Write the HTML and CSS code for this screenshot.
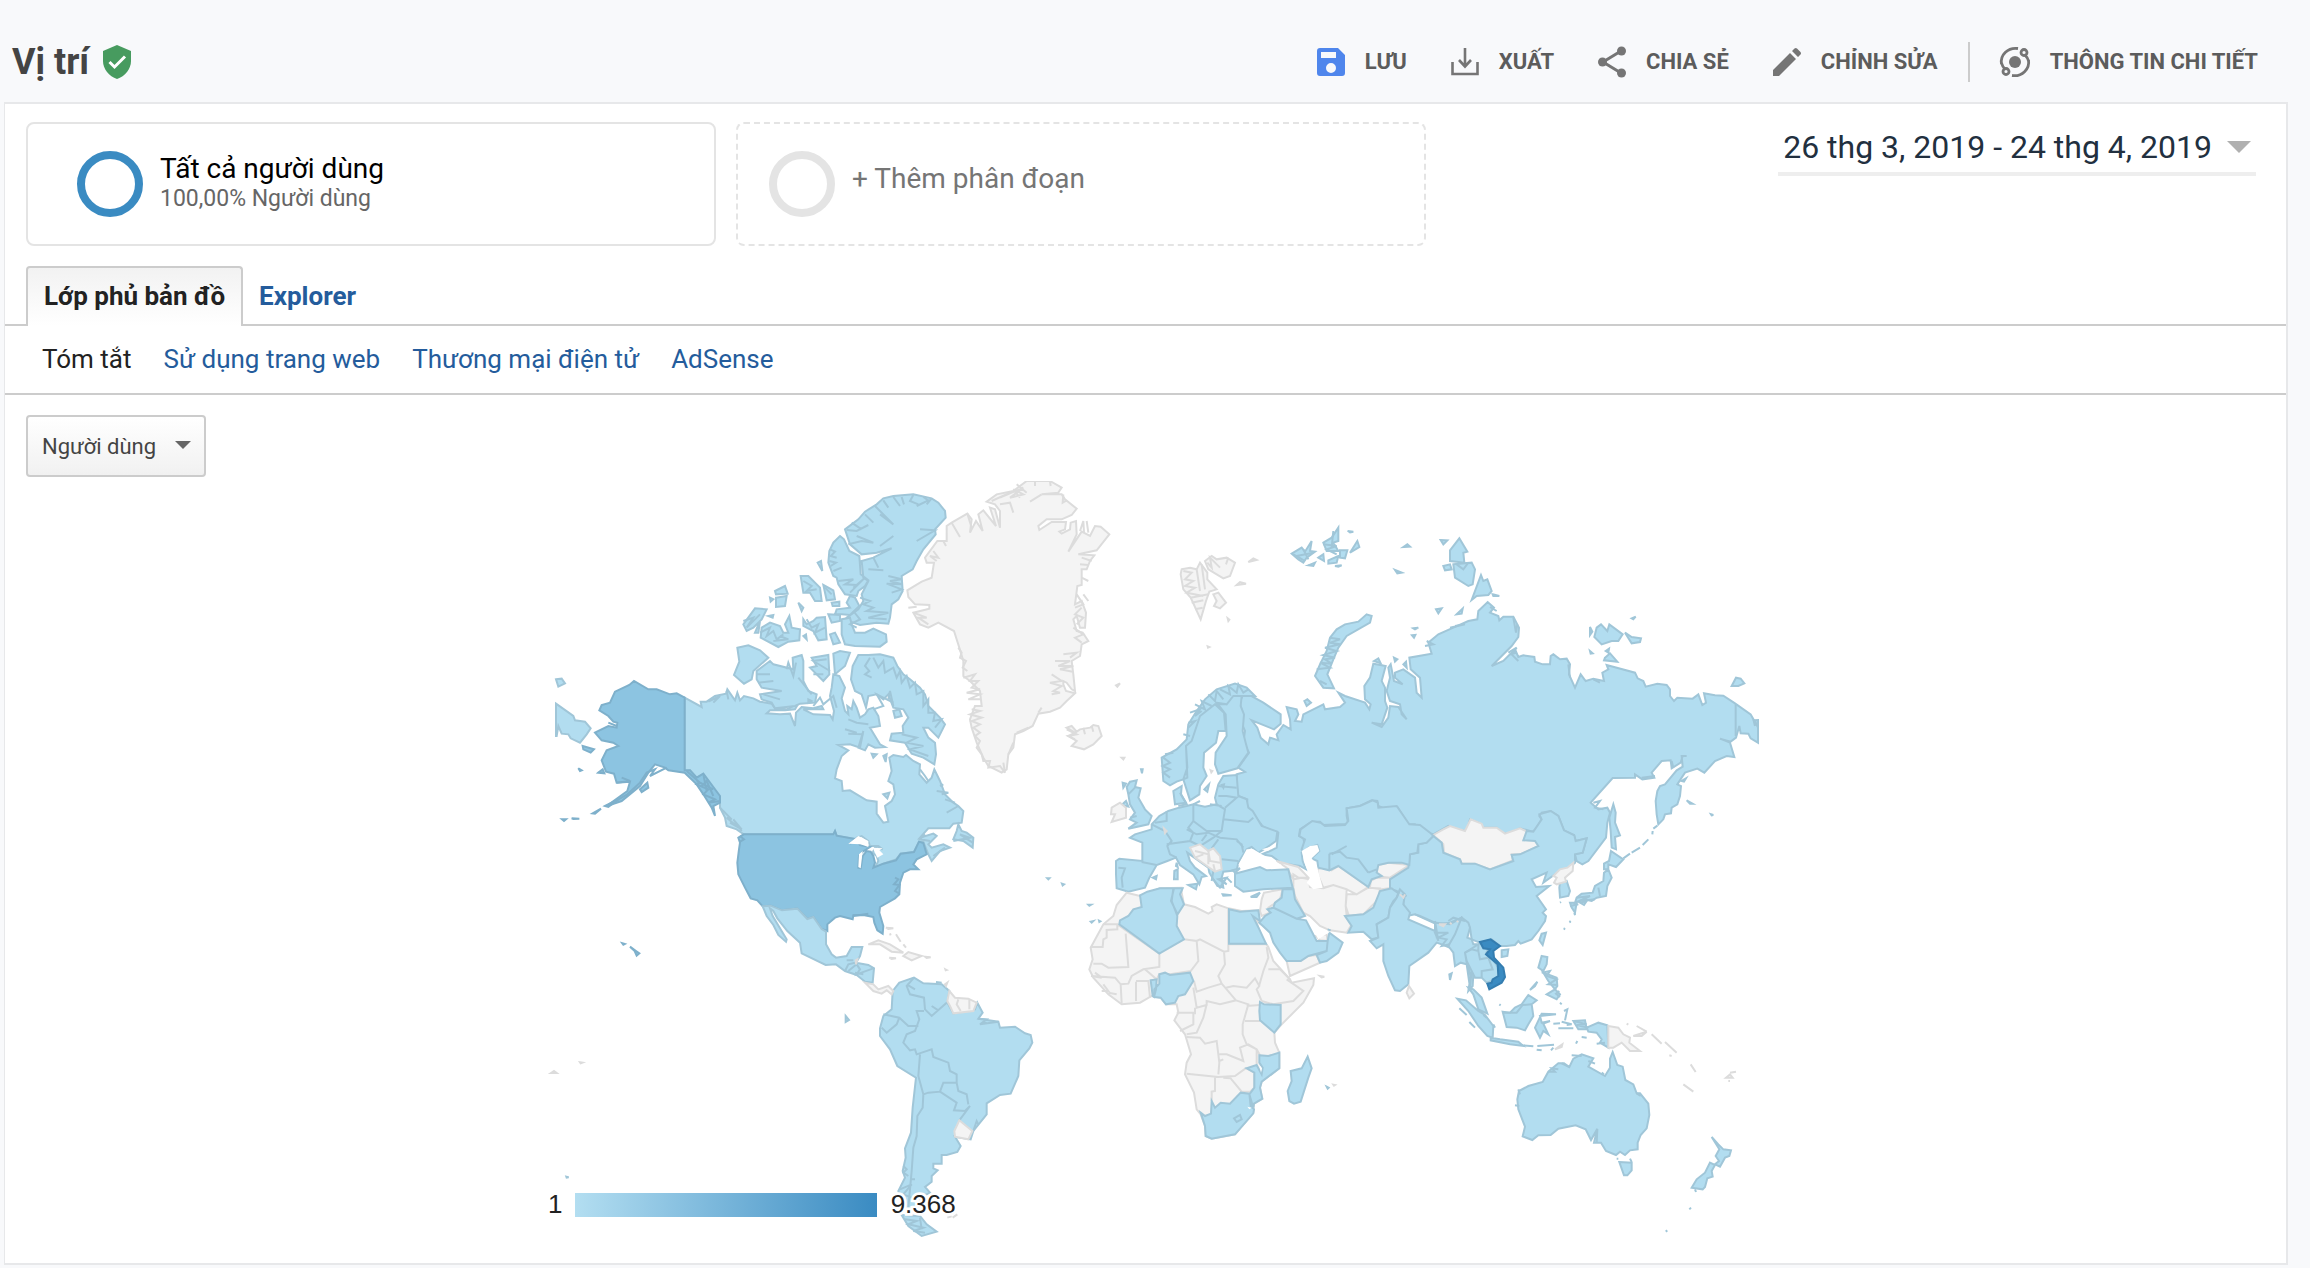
FILE: index.html
```html
<!DOCTYPE html>
<html lang="vi">
<head>
<meta charset="utf-8">
<title>Vị trí</title>
<link rel="stylesheet" href="styles.css">
</head>
<body>
<header class="topbar">
  <h1 class="title">Vị trí</h1>
  <svg class="shield" viewBox="0 0 28 34" aria-hidden="true"><path fill="#479b5f" d="M14 0 28 6v10c0 8-6 15.500-14 18C6 31.500 0 24 0 16V6z"/><path d="m6.500 17 5 5L22 11.500" fill="none" stroke="#fff" stroke-width="3"/></svg>
  <div class="actions">
    <button class="action" type="button"><svg viewBox="0 0 28 28" aria-hidden="true"><path fill="#4f86ec" fill-rule="evenodd" d="M3 0h18l7 7v18a3 3 0 0 1-3 3H3a3 3 0 0 1-3-3V3a3 3 0 0 1 3-3zm1 4v6h15V4zm10 11a5 5 0 1 0 0 10 5 5 0 0 0 0-10z"/></svg>LƯU</button>
    <button class="action" type="button"><svg viewBox="0 0 28 28" aria-hidden="true"><path d="M14 0v18M8 12l6 6.500 6-6.500M1.500 14v12h25V14" fill="none" stroke="#757575" stroke-width="2.600"/></svg>XUẤT</button>
    <button class="action" type="button"><svg viewBox="0 0 28 28" aria-hidden="true"><path d="M23 3 5 14l18 11" fill="none" stroke="#757575" stroke-width="3"/><g fill="#757575"><circle cx="23.500" cy="3" r="4.500"/><circle cx="4.500" cy="14" r="4.500"/><circle cx="23.500" cy="25" r="4.500"/></g></svg>CHIA SẺ</button>
    <button class="action" type="button"><svg viewBox="0 0 28 28" aria-hidden="true"><path fill="#757575" d="M0 22 17 5l6 6L6 28H0zM19 3l2.500-2.500a2 2 0 0 1 2.500 0l3.500 3.500a2 2 0 0 1 0 2.500L25 9z"/></svg>CHỈNH SỬA</button>
    <span class="divider"></span>
    <button class="action insights" type="button"><svg viewBox="0 0 30 30" aria-hidden="true"><g fill="none" stroke="#757575" stroke-width="2.800"><path d="M1.500 17C0 8 8 0 18 1.500M28.500 13c1.500 9-6.500 17-16.500 15.500"/><circle cx="24" cy="5.500" r="3"/><circle cx="6" cy="24.500" r="3"/><path d="M25 8c2 2 3 4 3.500 6M5 22c-2-2-3-4-3.500-6"/></g><circle cx="15" cy="15" r="6" fill="#757575"/></svg>THÔNG TIN CHI TIẾT</button>
  </div>
</header>
<main class="report">
  <section class="segments">
    <button class="segment" type="button"><span class="ring"></span><span><span class="seg-name">Tất cả người dùng</span><span class="seg-share">100,00% Người dùng</span></span></button>
    <button class="segment segment-add" type="button"><span class="ring"></span><span class="add-label">+ Thêm phân đoạn</span></button>
    <button class="date" type="button">26 thg 3, 2019 - 24 thg 4, 2019<span class="caret"></span></button>
  </section>
  <nav class="tabs"><a class="tab tab-on" href="#map">Lớp phủ bản đồ</a><a class="tab" href="#explorer">Explorer</a></nav>
  <nav class="subtabs"><a class="sub-on" href="#summary">Tóm tắt</a><a href="#usage">Sử dụng trang web</a><a href="#ecommerce">Thương mại điện tử</a><a href="#adsense">AdSense</a></nav>
  <div class="metric"><select aria-label="Chỉ số"><option>Người dùng</option></select><span class="metric-caret"></span></div>
  <figure class="map">
  <svg viewBox="-24 60 3684 2304" role="img" aria-label="Người dùng theo quốc gia">
    <defs><linearGradient id="scale"><stop offset="0" stop-color="#b3def1"/><stop offset="1" stop-color="#3a8bc2"/></linearGradient></defs>
    <!-- Canada, Alaska -->
    <g class="on">
      <path d="M434 710 485 738 482 722 500 722 525 705 558 698 562 685 585 718 592 695 600 718 612 705 640 712 660 722 695 728 705 742 740 745 775 728 765 745 735 748 690 748 680 757 720 760 750 758 765 795 768 755 785 738 820 742 845 735 850 745 790 745 820 760 870 762 878 775 882 750 870 705 875 680 880 640 898 645 915 680 905 712 915 750 925 760 922 735 935 745 940 720 950 740 960 770 975 760 985 745 1000 740 1015 765 1020 795 990 800 1020 850 1035 858 1005 860 985 850 975 868 955 860 970 810 960 860 930 850 895 852 925 868 905 885 890 925 885 952 905 960 908 990 930 988 980 1018 1010 1022 1010 1058 1030 1085 1045 1082 1035 1035 1055 1020 1065 1000 1060 970 1045 960 1055 930 1048 890 1060 882 1090 888 1098 882 1120 900 1140 910 1138 940 1160 965 1175 950 1183 925 1200 960 1215 1000 1240 1025 1255 1035 1270 1050 1265 1085 1240 1088 1228 1102 1165 1102 1140 1130 1180 1118 1190 1125 1165 1150 1175 1160 1210 1150 1230 1160 1200 1170 1175 1200 1165 1180 1150 1142 1137 1142 1122 1173 1082 1178 1068 1195 1030 1208 1005 1220 1015 1200 1010 1185 998 1175 1005 1160 1028 1165 1015 1155 990 1155 985 1140 965 1125 950 1130 945 1135 890 1124 885 1110 880 1120 611 1120 590 1105 560 1095 555 1070 540 1040 540 1010 520 985 490 940 470 950 450 928 434 930z"/>
      <path d="M1255 1090 1250 1110 1240 1135 1270 1140 1298 1160 1300 1130 1280 1115 1265 1110zM955 582 985 582 1020 580 1060 590 1072 615 1090 640 1110 655 1140 680 1155 700 1165 735 1200 770 1215 790 1195 830 1165 800 1150 800 1165 830 1185 845 1188 880 1183 910 1150 890 1115 878 1095 845 1050 838 1055 818 1090 815 1088 795 1105 770 1090 745 1060 740 1045 700 1030 715 1010 700 985 705 978 740 965 700 945 690 933 655 938 615z"/>
      <path d="M915 205 955 175 975 152 1010 130 1030 112 1060 105 1120 100 1175 112 1195 125 1215 150 1217 170 1185 205 1187 220 1150 265 1130 300 1118 325 1085 345 1088 390 1075 415 1055 430 1050 470 1045 488 1010 485 960 492 925 480 920 470 955 445 970 420 965 400 985 360 970 350 965 300 1000 290 1055 262 1010 275 965 280 930 250zM900 225 912 235 928 270 958 285 962 340 985 358 975 375 955 390 950 405 915 400 895 370 890 350 880 345 865 305 868 270 880 245z"/>
      <path d="M905 475 930 470 935 490 945 515 975 515 1000 503 1038 520 1040 542 1020 557 945 555 915 550 905 520zM650 630 690 600 700 610 760 625 758 590 785 582 790 600 790 660 805 690 830 700 825 725 780 728 765 735 705 742 695 725 665 715 660 700 725 690 665 680 650 655zM592 560 625 553 660 568 685 590 640 630 635 655 612 668 582 642 598 602zM815 590 865 582 868 640 850 660 810 620 830 615zM880 578 900 570 930 575 915 615 885 640z"/>
      <path d="M665 500 690 485 720 495 730 515 745 515 735 490 748 465 755 500 780 505 778 538 745 542 715 558 662 530zM610 490 645 442 680 445 665 475 640 500 620 510zM790 475 800 490 820 480 830 470 855 468 860 535 835 538 820 510 790 495zM870 520 885 515 900 545 880 550zM782 345 805 345 840 380 845 420 825 420 810 395 790 395zM850 372 880 388 885 415 860 418zM875 425 898 422 898 435 878 435zM930 405 945 410 958 435 930 462 905 460 885 460 890 445 930 440 920 425zM705 390 735 375 743 398 708 400zM708 410 740 405 735 435 708 438zM833 305 843 300 847 330zM775 425 790 440 785 450zM865 460 900 462 900 480 875 485zM690 410 700 415 692 422zM685 465 700 462 698 470zM645 515 660 480 655 515zM790 525 798 520 800 535zM995 878 1010 880 1000 890zM1030 885 1040 880 1037 903zM1030 1000 1048 995 1042 1012zM1060 750 1078 745 1085 765 1065 770zM805 715 815 720 805 725z"/>
      <path d="M48 728 100 765 105 778 135 782 152 802 140 820 120 845 92 832 85 820 65 818 55 795 50 825 48 825zM48 655 65 653 75 667 55 677z"/>
      <path class="line" d="M920 207 950 210 985 192M935 185 965 205M975 160 1000 185M1005 135 1060 190 1020 160M1030 118 1045 140M1060 108 1080 135M1085 108 1092 130M1120 102 1110 120 1135 130M1150 108 1165 118 1130 135M1175 112 1160 130M1130 240 1185 208 1140 205M925 250 965 240 1000 245 950 225M1020 255 1060 225M1000 290 1015 320M985 325 1030 328M1045 345 1085 355 1050 360 1085 370 1040 368 1085 385 1055 395M870 265 885 272 872 285 890 290M868 300 888 305 872 315M880 330 905 320M895 360 940 355 915 370 950 372M930 395 975 350 940 380M960 410 990 420 970 430 1000 440 980 450 1045 455 985 470 1040 475M940 450 960 475 930 490 950 500M990 590 975 615 988 630 975 640 995 650M1000 590 1015 620 1030 600 1035 635 1060 620 1070 650 1080 630 1085 665 1100 645 1110 680 1125 665 1130 700 1150 690 1150 735 1165 715 1165 755 1185 755 1180 780 1205 775 1185 800M1085 820 1130 830 1100 845 1150 855 1110 865 1165 885M660 515 690 500 680 525 700 510 710 535 730 520M700 540 745 535 720 525M790 360 815 375 800 390 830 385M855 380 875 400M870 630 820 600 860 595M820 640 850 640M740 625 745 605 760 645 768 605M650 640 690 640M655 665 700 660M670 700 720 715M560 690 565 715M505 722 540 705 520 725M915 805 950 815 925 818 970 820M925 775 950 785 985 790M1000 745 1030 735 1010 700 1060 725M1200 975 1210 970M1190 990 1225 995 1205 1000M1215 1015 1245 1025M1220 1055 1255 1035M1155 1120 1140 1135 1170 1140M1240 1140 1290 1130 1260 1120 1298 1145M1140 925 1155 945 1165 960M1180 1185 1215 1160"/>
      <path class="line" d="M540 1040 560 1060 550 1050 575 1075 560 1070 590 1095 570 1085 605 1105 580 1075 605 1110M610 480 640 470 620 500 660 460M800 475 815 500 835 490 825 515 855 500M1045 715 1050 690 1060 735M820 735 840 710 850 730 880 705 890 740M775 650 815 700"/>
    </g>
    <g class="mid">
      <path d="M434 710 410 697 390 700 350 685 325 685 282 660 268 672 225 692 210 725 185 732 178 748 205 765 220 782 232 785 230 800 205 795 165 815 185 838 220 845 235 855 200 868 185 898 198 932 222 938 230 965 270 962 262 990 200 1035 245 1020 300 975 325 935 345 910 375 920 385 928 434 935 470 970 490 1000 515 1040 525 1065 520 1035 540 1025 540 1005 490 938 470 950 450 928 434 928z"/>
      <path d="M128 855 162 865 152 875 130 865zM115 922 125 928 120 930zM175 935 188 925 193 937zM300 985 322 965 325 980 305 993zM158 1057 183 1043 165 1058zM66 1075 78 1075 72 1080zM95 1072 118 1073 100 1074zM195 1035 235 1015 205 1038z"/>
      <path class="line" d="M200 1035 262 1000 300 965 320 935 345 925 330 945 380 920M230 965 270 960 245 950M440 930 480 965 470 970 505 985 490 1000 525 1015 505 1025 540 1020M470 960 520 985M485 975 500 960 520 1005M205 785 230 795M490 940 500 990"/>
      <path d="M611 1120 880 1120 885 1110 890 1124 945 1134 930 1148 952 1140 960 1152 990 1158 968 1172 957 1185 955 1220 962 1222 968 1185 980 1170 992 1172 1000 1185 1005 1205 1000 1220 1030 1208 1068 1198 1082 1178 1122 1173 1137 1142 1150 1146 1160 1180 1130 1195 1120 1210 1135 1225 1110 1225 1090 1235 1080 1265 1078 1300 1065 1312 1020 1338 1018 1355 1030 1395 1028 1418 1012 1408 1003 1385 1000 1368 985 1365 970 1362 940 1363 938 1375 900 1365 885 1370 862 1390 862 1410 845 1404 820 1368 802 1374 772 1343 726 1348 692 1334 668 1336 652 1318 632 1312 615 1280 595 1240 592 1205 597 1165 600 1145 595 1130z"/>
      <path class="line" d="M1065 1250 1075 1255 1062 1270 1078 1272 1065 1290 1078 1298M600 1125 612 1135 600 1142M940 1365 985 1358"/>
      <path d="M247 1447 254 1449 250 1451zM270 1457 288 1470 298 1477 290 1484 284 1470z"/>
    </g>
    <g class="sea"><path d="M968 1170 962 1222 955 1218 957 1180zM925 1148 955 1125 985 1140 985 1158 962 1150zM998 1160 1028 1162 1018 1168 1030 1180 1012 1190z"/></g>
    <!-- Greenland, Iceland -->
    <g class="off" transform="translate(1020 0)">
      <path d="M440 60 510 60 545 80 535 95 485 100 545 100 555 115 590 143 575 162 545 175 500 175 475 195 478 207 515 183 558 183 555 205 538 212 545 218 570 205 572 185 588 180 590 220 565 272 605 212 630 225 645 195 662 197 688 220 650 268 595 280 643 283 630 300 620 325 605 325 605 372 592 375 585 430 605 420 618 455 615 500 600 500 590 465 580 475 590 510 608 515 625 540 605 550 600 585 575 600 580 640 585 690 575 685 560 665 550 660 550 670 558 690 585 697 560 720 540 740 510 752 475 758 458 795 430 810 405 820 400 860 385 880 380 925 365 935 325 915 310 890 290 845 275 800 270 775 285 735 305 735 300 690 270 660 250 645 250 600 238 560 222 510 175 485 145 500 120 490 100 455 148 443 148 432 105 430 85 408 82 388 125 362 155 350 162 305 140 305 135 290 172 240 200 240 200 195 215 185 262 158 275 175 270 215 288 180 308 210 295 160 310 148 348 195 330 140 345 145 360 200 360 150 345 130 320 122 350 100 400 90z"/>
      <path d="M560 800 575 795 590 812 600 805 630 800 640 792 655 795 665 825 640 850 612 865 575 855 590 840 565 825 585 815z"/>
      <path class="line" d="M215 185 240 228M262 158 275 200M190 240 198 255M160 270 175 290 150 285 170 300M335 120 390 95 360 110 430 80 390 110 430 100 400 85 420 110M410 70 440 95M450 122 485 100M465 60 465 75M510 60 512 75M550 100 548 125 560 118M360 130 390 125 400 155M600 210 610 180 612 215M620 180 625 215M605 290 635 300M600 310 625 312M590 400 610 430 585 440M605 350 625 360M610 400 625 420M605 440 585 460 610 470 590 490M580 500 610 520 585 530 605 545M550 580 590 575 570 590M525 600 570 600 535 615 580 615 540 625 578 632M515 640 545 660 510 665 545 675 520 690 540 695 515 700M235 560 245 575 240 590 258 600 248 620 262 630M250 650 285 640 270 660 295 660 275 680 300 685 260 695 300 700 265 715 300 715M275 745 300 750 270 760 305 770 275 780 300 790 280 800 300 815 285 825 300 840 290 860 305 880 310 900 330 900 325 920 360 915 375 935 370 905M385 880 400 845M410 815 445 800M100 455 140 470 115 470 145 490M85 440 110 437M475 755 485 740"/>
      <path d="M708 673 720 667 712 677zM725 890 733 890 730 895z"/>
      <path class="line" d="M560 805 590 820 565 825 585 835M610 800 615 820M635 795 640 812"/>
    </g>
    <!-- Svalbard -->
    <g class="off" transform="translate(1740 120)">
      <path d="M185 205 210 200 230 205 240 185 262 215 262 235 290 265 268 272 258 300 242 355 212 290 190 265 182 220zM255 180 275 165 290 175 320 170 345 185 330 225 310 232 265 205zM280 280 295 275 318 305 300 322 282 315 290 300zM385 183 400 172 410 177zM350 252 360 243 378 248zM323 352 328 356 325 360zM263 436 268 438 264 440z"/>
      <path class="line" d="M190 210 215 215 195 235 220 240 195 255 225 260 200 275 250 285M230 205 240 270M245 190 255 265M212 290 265 280M215 305 250 298M225 325 248 320M262 185 275 200 270 170 300 200M325 170 318 190"/>
    </g>
    <!-- Russia -->
    <g class="on" transform="translate(1740 120)">
      <path d="M370 580 385 580 430 605 482 640 482 668 462 685 395 658 412 680 422 710 445 730 450 710 475 718 470 700 490 672 512 685 510 655 500 618 530 625 535 640 525 660 545 662 550 640 610 610 615 625 660 618 675 605 655 575 675 585 735 605 748 625 752 610 735 595 733 555 750 530 760 488 797 495 785 540 795 560 795 600 802 620 785 670 755 665 785 678 805 650 810 615 835 618 860 655 845 640 840 610 810 600 800 570 810 530 805 500 812 490 822 540 848 550 825 530 825 515 850 505 885 530 890 575 905 590 900 530 872 505 868 470 935 458 925 425 955 400 995 382 1045 360 1072 355 1075 330 1103 303 1122 320 1110 335 1135 345 1138 358 1150 347 1180 347 1197 380 1195 408 1175 435 1115 495 1150 480 1185 445 1195 468 1210 463 1243 468 1245 482 1268 490 1290 490 1292 465 1300 460 1320 475 1340 473 1350 490 1347 520 1365 560 1382 520 1397 540 1420 533 1452 540 1447 515 1465 505 1460 492 1545 515 1553 532 1570 540 1577 557 1612 548 1640 552 1650 565 1650 585 1662 600 1672 590 1718 593 1735 580 1747 612 1758 605 1752 577 1785 583 1810 584 1845 607 1892 640 1902 658 1914 657 1914 725 1892 712 1885 698 1862 697 1858 675 1848 710 1832 722 1800 713 1830 725 1843 768 1820 765 1785 780 1753 815 1732 803 1695 815 1685 830 1672 850 1683 855 1680 885 1672 910 1655 920 1653 937 1635 940 1630 955 1615 970 1610 940 1607 900 1612 870 1620 855 1635 850 1670 808 1688 797 1685 765 1700 765 1688 765 1682 785 1655 802 1652 778 1625 780 1595 815 1603 830 1567 835 1545 820 1545 830 1478 831 1412 905 1435 925 1462 920 1470 935 1462 965 1458 1010 1405 1080 1387 1090 1370 1080 1365 1060 1388 1055 1400 1012 1367 1020 1362 1002 1332 988 1315 945 1292 930 1265 935 1258 945 1265 955 1248 985 1238 992 1200 982 1165 998 1145 995 1130 980 1090 980 1075 965 1050 955 1040 990 1005 985 985 975 940 1000 905 990 885 970 865 970 832 918 800 925 775 915 772 900 755 898 720 915 680 922 680 945 685 970 655 970 610 972 600 962 575 962 540 985 537 1005 550 1012 555 1035 545 1055 548 1080 558 1105 540 1095 485 1087 455 1065 425 1060 450 1050 470 1040 475 995 430 978 412 955 395 930 380 920 382 895 355 885 350 855 350 820 375 813 355 800 387 755 370 725 375 690 362 660 368 635 358 605z"/>
      <path d="M740 340 755 345 750 365 680 405 655 440 640 475 622 520 642 562 610 560 585 525 600 490 620 450 630 410 650 385 675 370 715 362zM1018 112 1042 152 1030 155 1033 185 990 180 990 148zM1000 190 1055 185 1065 205 1058 250 1045 255 1005 230zM970 195 990 190 995 205 975 208zM1083 222 1090 240 1102 235 1115 270 1105 282 1070 285 1055 297zM962 117 982 118 970 130zM1010 340 1028 323 1025 338zM948 325 965 322 955 337zM850 138 862 130 870 137zM825 207 845 215 832 217zM553 600 562 595 573 605 560 615zM762 480 775 472 782 487zM1118 280 1138 285 1120 285zM515 158 545 140 555 152 575 120 570 150 585 152 560 170 550 185 535 175zM565 193 585 185 580 195zM610 125 635 110 655 80 655 120 640 125 655 150 620 150zM595 170 610 160 612 180zM660 148 682 148 675 172 660 170zM625 178 655 165 650 185 625 188zM690 155 712 120 718 138zM683 90 700 92 690 94zM645 195 665 193 655 197zM880 382 895 380 885 385zM876 403 886 402 882 410zM822 470 832 475 825 482zM850 490 858 482 860 500zM1430 380 1443 370 1462 390 1468 370 1508 400 1495 420 1475 420 1445 430 1423 408zM1515 395 1535 408 1563 412 1560 423 1535 427zM1455 470 1470 457 1492 482 1452 478zM1410 378 1417 392 1410 402zM1457 450 1467 443 1465 455zM1410 450 1418 457 1412 458zM1535 352 1547 347 1540 355zM1835 555 1848 530 1862 533 1873 547 1855 555zM1480 910 1487 935 1485 965 1500 1003 1485 1008 1488 1045 1475 1040 1472 990 1468 950zM1700 898 1718 908 1710 908zM1773 940 1780 942 1775 943zM1684 840 1698 832 1692 842z"/>
      <path class="line" d="M520 160 555 180 530 165 580 155M550 145 565 175M610 130 650 135 620 145 650 160M640 90 635 140M630 410 660 415 630 425 660 430 615 440 650 450 610 462 645 470 615 475 635 488 600 485 630 500 590 505M600 540 620 550M1847 610 1847 705M1900 655 1905 675M1905 660 1914 680M920 420 940 430 915 435M990 380 1035 370 1005 375M1180 350 1188 395 1192 370M1110 318 1130 330M1165 455 1190 440 1175 460 1195 480M1345 490 1350 530M1420 535 1440 545M1170 460 1190 455M1420 905 1440 900 1425 920 1450 925M1565 830 1605 825M1655 780 1660 800M1010 190 1030 205 1045 185M1600 983 1612 974M1597 1000 1598 990M1585 1015 1568 1032M1560 1040 1535 1055M1530 1058 1510 1072"/>
    </g>
    <!-- Middle East and Central Asia without data -->
    <g class="off" transform="translate(1620 600)">
      <path d="M712 625 740 615 755 628 775 615 865 678 830 700 800 685 760 672 730 680 715 645zM640 640 655 650 685 650 690 678 730 682 760 672 800 685 797 735 815 790 800 815 750 808 720 795 690 765 670 755 645 705 640 680zM800 700 830 700 865 680 900 682 895 715 875 735 850 760 800 765 797 735zM590 600 625 610 655 618 690 655 665 650 640 655 620 620zM895 612 925 605 988 612 930 650 885 645 885 625zM872 660 890 650 930 650 938 680 905 685 870 680zM1060 522 1090 505 1110 495 1155 510 1172 475 1205 488 1210 500 1250 500 1275 518 1320 502 1342 512 1332 535 1365 538 1378 555 1320 580 1295 580 1298 598 1230 625 1185 608 1145 608 1140 595 1092 575 1090 550z"/>
    </g>
    <!-- China, Kazakhstan, South Asia -->
    <g class="on">
      <path transform="translate(2580 1200)" d="M100-75 125-55 130-25 180-5 185 8 225 8 270 25 340 0 335-18 360-20 415-45 405-60 370-62 380-90 400-88 425-125 418-140 452-150 475-135 492-92 523-77 527-60 560-68 548-25 525-20 525 5 500 25 480 30 458 45 430 65 440 35 395 55 408 78 448 75 410 105 438 145 428 155 438 165 435 180 415 210 395 235 362 248 355 240 345 252 320 255 300 255 275 235 240 245 215 235 210 200 185 170 150 185 110 190 45 160 20 165 10 140 10 110-10 90-30 85-30 55 25 20 30-20 55-25 55-50 80-55z"/>
      <path transform="translate(1620 600)" d="M658 525 662 505 697 480 722 485 735 495 795 492 805 480 800 442 840 435 878 418 893 425 895 440 950 435 988 490 1020 492 1050 515 1060 525 1040 545 1015 550 1012 575 990 580 988 612 965 605 925 605 895 612 890 635 905 645 875 655 865 678 775 615 748 628 715 620 712 600 695 592 718 570 712 552 685 560 672 575 665 565 675 535zM748 578 780 572 800 590 835 595 865 635 M795 765 850 760 880 740 900 690 935 682 960 700 940 720 930 740 925 770 890 790 895 830 875 835 850 812 805 815 815 795z"/>
      <path class="line" transform="translate(1620 600)" d="M748 578 748 628M755 580 800 555M865 635 890 625"/>
      <g transform="translate(2580 1200)">
        <path d="M0 85 15 100 10 130 30 155 25 175 105 210 105 185 150 190 185 170 195 190 165 235 150 260 125 250 110 245 85 275 28 315 25 370 0 390-15 388-35 345-50 300-50 250-70 262-90 240-65 230-70 190-35 170-30 140-10 110z"/>
        <path d="M185 170 205 185 210 200 202 230 215 235 220 250 235 250 195 275 200 300 215 330 210 380 200 310 182 305 165 315 160 275 145 255 165 220zM235 250 240 245 265 262 258 278 275 290 295 320 295 345 275 360 260 365 245 350 225 350 220 340 218 375 205 390 212 345 200 305 195 275z"/>
        <path class="line" d="M195 275 215 265 235 270 240 295 265 290 278 325 245 330 245 350M235 250 235 270M45 160 60 165 105 185M105 180 115 240 105 215 145 215 115 230 140 235 125 255 150 250M145 180 160 170 195 180M0 85-10 110M5 100 20 105"/>
        <path d="M205 380 220 385 245 410 262 458 235 445 220 400zM172 413 198 418 235 450 255 462 280 495 278 530 262 525 235 495 205 450zM272 530 300 535 355 542 370 555 330 550 272 538zM308 452 330 455 345 440 365 430 385 402 410 418 395 430 400 465 385 490 375 508 350 500 320 498zM425 458 468 460 420 465 425 485 450 480 430 488 445 520 430 510 420 530 405 500zM425 285 442 288 440 310 430 330 415 320zM430 335 470 350 472 375 465 385 445 360zM440 400 465 385 480 400 470 415zM390 387 412 362 405 375zM560 500 595 485 622 493 625 560 600 545 605 535 590 515 565 512zM520 480 555 478 560 505 535 505zM425 218 438 215 428 252 418 238zM305 268 325 265 322 285 305 288zM148 340 155 337 150 357z"/>
        <path class="line" d="M310 455 350 455 368 432 395 430M370 553 400 556M412 555 462 551M410 566 425 568M453 568 460 560M492 450 502 445 495 478M460 488 480 487M475 502 520 502M485 482 515 490 500 492M528 548 532 540M545 528 560 530M178 442 200 462M208 483 225 500M280 490 285 500M250 462 260 470M520 480 560 490 530 492 565 500M590 548 615 545M425 335 450 330 440 345 470 355 445 370 470 372M480 408 468 398 478 390M480 425 485 430M298 430 302 433M480 125 483 123M510 183 512 185M492 203 495 205"/>
        <path d="M357 690 385 675 428 663 445 632 475 607 492 607 508 618 520 593 545 580 580 592 565 617 615 645 630 620 630 593 638 573 652 612 668 617 676 657 700 670 710 697 720 697 745 728 748 762 740 802 722 822 713 845 713 865 690 868 675 882 660 872 648 882 618 870 603 845 582 845 592 803 573 837 557 805 527 793 475 803 452 822 415 823 397 837 368 826 375 797 355 745 352 715zM658 903 695 905 695 928 682 943 672 943zM935 828 955 850 970 865 993 868 988 885 975 890 960 917 945 910 957 900 947 885 958 865zM930 905 945 912 935 930 938 947 922 952 915 978 908 985 875 980 890 955 915 935z"/>
        <path class="line" d="M445 632 465 632 455 622 475 625M485 607 508 618M515 583 545 585M565 600 585 608M592 805 590 845M345 733 358 735M355 685 360 700M710 697 722 705M650 893 655 893M690 893 695 903M885 985 888 993M868 1045 873 1040M797 1108 802 1112M605 635 612 640"/>
      </g>
      <g transform="translate(2820 120)">
        <path d="M393 1050 430 1075 408 1098 385 1090 385 1105 372 1105 372 1088 387 1080zM385 1105 395 1130 382 1155 378 1185 350 1190 335 1200 310 1195 285 1205 290 1190 305 1178 338 1175 345 1155 370 1140 372 1115zM270 1205 290 1205 285 1235 275 1220zM300 1205 320 1200 312 1212zM240 1145 260 1140 270 1170 265 1185 240 1190 238 1160z"/>
        <path class="line" d="M290 1190 330 1185 300 1200 345 1195M360 1185 355 1160M270 1215 295 1210M283 1235 285 1243M268 1263 272 1260M251 1284 255 1282"/>
      </g>
    </g>
    <g class="off" transform="translate(2580 1200)">
      <path d="M460 45 480 25 502 20 520 5 518 30 495 50 498 62 470 70 462 65 470 50zM625 495 655 500 670 520 690 530 688 545 720 570 690 570 665 545 640 560 625 560zM700 525 740 512 725 525zM27 375 42 398 28 412 20 395zM117 190 135 190 130 196zM465 565 487 550 485 558zM978 650 990 640 998 650z"/>
      <path class="line" d="M710 495 740 512M680 488 685 491M755 520 785 548M795 543 830 575M808 583 815 585M872 610 887 633M850 670 880 692M990 635 1008 632M985 660 990 660M0 100 10 110 15 100M150 185 155 190M170 180 175 183"/>
    </g>
    <path class="top" transform="translate(2580 1200)" d="M240 243 272 235 300 255 280 270 282 290 310 320 315 348 305 365 268 385 262 368 275 365 278 355 295 345 293 310 258 280 270 265 250 262z"/>
    <!-- Europe -->
    <g transform="translate(1620 600)">
      <g class="on">
        <path d="M108 600 118 593 187 600 187 545 150 530 165 520 215 505 215 490 238 465 265 450 297 440 320 435 340 430 375 437 410 430 405 410 415 370 430 345 470 342 475 405 500 415 505 440 518 450 545 495 592 512 588 540 560 560 535 575 515 558 500 565 475 605 470 628 430 632 425 650 430 680 412 675 388 635 385 620 322 575 330 600 345 620 378 645 365 648 358 670 340 640 300 612 288 590 262 600 230 612 208 650 195 680 145 692 110 682 108 640z"/>
        <path d="M250 360 245 290 290 265 320 235 325 190 350 150 375 115 410 85 465 68 500 80 525 105 485 105 460 105 440 130 405 130 360 165 335 240 318 255 322 350 310 355 290 362 270 373zM405 130 432 155 437 210 415 210 408 245 372 275 370 320 380 345 360 375 358 400 330 418 310 355 322 320 318 255 335 240 360 165zM410 125 440 130 460 105 485 105 482 135 492 160 488 210 497 245 505 275 472 322 415 338 405 310 407 275 440 225 437 160zM280 390 305 375 303 400 318 425 285 430z"/>
        <path d="M150 362 170 358 165 378 182 382 175 410 195 445 215 465 205 490 145 503 170 485 150 475 165 455 150 430 145 400 140 378zM125 432 138 420 145 437zM283 630 293 625 293 655 282 655zM290 605 293 618 288 615zM325 672 352 668 348 685zM428 700 455 703 430 704zM512 708 540 695 530 708zM183 325 188 325 186 337zM128 365 138 368 130 380zM218 650 230 645 228 655zM373 385 387 370 382 392zM425 372 432 370 430 380zM25 731 33 731 28 734zM32 782 40 780 35 785zM57 779 61 781 58 783z"/>
        <path class="line" d="M185 603 230 612M115 620 135 622 125 650 128 680M215 490 255 510 275 540 262 555 270 580 290 590M340 430 340 480 325 500 340 515 330 540 260 550M340 480 380 510 425 510 430 475 435 445 410 430M430 475 505 483 520 470M435 440 470 410 440 405 415 405M330 540 360 555 400 530 425 510M320 505 350 520 385 515 420 530 470 535 490 560M415 535 395 562M425 595 475 600M412 375 470 380M380 520 365 540M260 450 260 480 225 485M400 630 395 660M470 540 485 550 490 575M390 430 425 435"/>
        <path class="line" d="M330 155 360 145 345 165 365 150M325 185 345 180 325 200M345 130 375 145 365 120 395 135M385 100 405 120 410 90 430 115M420 85 450 100 445 75 470 95 475 70 490 95 505 85M310 220 330 225M250 290 270 305 248 315 270 325 250 335 270 350M255 280 280 275M300 395 320 430 295 435M340 430 360 420M145 400 165 380M150 470 170 465M425 655 440 670 415 655 440 650 420 680 400 655M440 650 455 665"/>
      </g>
      <g class="off">
        <path d="M330 560 360 550 385 570 400 562 420 585 425 625 405 632 385 618 345 590zM95 440 120 425 138 440 138 470 95 483 105 460 93 460zM252 502 260 510 255 516zM392 328 397 330 394 334z"/>
        <path class="line" d="M345 570 385 580 385 610M385 570 390 600 420 605M345 590 370 580M400 610 405 630"/>
      </g>
      <g class="sea"><path d="M475 612 500 565 520 565 545 580 605 612 600 625 545 615 495 625zM665 570 690 555 712 552 718 570 695 592 712 620 728 680 700 685 680 665 690 650 675 610z"/><path d="M545 565 570 558 565 570z"/></g>
    </g>
    <!-- Africa and Arabia -->
    <g transform="translate(1560 1200)">
      <g class="off">
        <path d="M200 95 240 105 300 82 365 80 365 95 372 130 405 138 445 158 458 150 455 138 470 130 505 142 545 150 595 148 598 185 585 170 605 230 625 258 640 300 690 355 695 365 762 352 760 372 730 425 665 490 643 515 645 545 658 575 658 622 605 662 600 680 607 713 582 728 580 755 525 820 455 833 437 825 435 795 422 760 410 745 402 695 375 640 380 605 393 580 375 520 343 478 355 455 350 430 318 430 302 410 275 405 240 425 185 430 145 400 100 350 88 325 98 295 92 260 130 190 160 165 170 132z"/>
        <path class="line" d="M92 258 128 258 130 235 140 230 140 207 172 205 172 190 130 190M197 218 205 318 145 320 125 308 100 308M172 190 298 278 298 318 250 325 215 345 205 368 182 370 165 350 95 345M372 235 410 240 415 300 392 330 330 340 298 340 290 355 255 325M350 195 360 220 372 235M410 240 420 235 492 272 505 270 505 142M507 250 620 250M492 272 495 310 475 345 485 368 445 380 410 392 402 360M485 368 500 385 528 418 480 430 440 420 440 432 410 440 400 380M498 380 520 375 560 380 585 352 598 375 590 385 605 420M620 258 625 290 610 330 598 372M625 325 660 325 690 355M680 355 730 390 700 420 640 430 605 420M440 430 430 470 410 515 380 520M380 528 420 530 435 548 470 540 478 605 475 640M380 638 475 648 525 645 560 620M478 580 500 580 550 600 540 560 565 550 590 565 590 610M465 650 465 690 455 692 455 720M490 650 512 652 545 692 570 692 583 680 583 635 560 622M528 418 565 430 548 490 548 520 560 550 590 565 600 583M560 435 598 432M555 480 600 480M228 362 228 420M228 360 265 360 270 410M182 370 185 428M130 370 145 390 125 390M145 395 170 400M350 455 400 455 400 490 360 510M405 440 405 460M93 345 125 350 105 335M478 600 490 595"/>
        <path d="M680 300 722 300 745 285 770 282 780 305 690 345zM612 95 668 85 660 115 640 130 625 140 630 155 605 165 600 150 605 115zM780 345 793 347 785 349zM820 671 825 672 822 674zM768 225 800 220 803 240 780 238z"/>
      </g>
      <g class="on">
        <path d="M240 103 262 92 300 82 340 82 335 120 352 165 350 195 372 235 298 278 178 190 180 178 205 165 220 145 245 138zM342 82 368 82 360 100 372 130 353 160 333 120zM507 145 540 152 595 148 600 180 578 165 598 205 618 248 507 248zM298 340 315 335 330 342 390 335 400 360 375 400 355 405 345 425 318 430 302 410 283 408 283 385 298 368zM272 358 290 355 288 385 282 408 278 405zM600 423 612 430 662 432 662 490 643 515 600 478 598 450zM598 583 625 585 658 575 658 622 605 662 600 680 607 713 582 728 580 740 568 700 583 680 583 635 560 622 590 612 605 640 608 620 598 605zM422 755 435 765 453 758 455 720 465 740 482 725 510 728 542 695 568 698 572 735 582 745 580 757 525 820 455 833 437 825 435 795zM743 587 755 622 745 650 722 722 702 728 688 720 683 690 695 660 692 630 725 622z"/>
        <path d="M598 185 615 165 632 155 622 145 640 140 710 173 738 178 770 240 803 240 800 270 745 285 722 300 680 300 660 275 640 245 630 215zM803 240 808 215 848 245 835 275 800 300 780 305 770 282 800 270zM668 85 700 85 705 115 735 165 710 173 640 140 645 125 665 110zM525 38 600 18 620 28 685 25 698 80 610 85 550 92 525 75zM518 28 540 22 525 35zM800 677 806 680 803 683z"/>
        <path class="line" d="M522 772 540 762 545 775 530 783zM803 205 812 208"/>
      </g>
      <g class="sea"><path d="M740 172 765 205 810 212 775 235zM562 737 575 740 568 745zM598 612 606 622 603 635z"/></g>
    </g>
    <!-- Latin America -->
    <g class="on">
      <path transform="translate(0 1020)" d="M668 316 692 314 726 328 772 323 802 354 820 348 845 384 858 392 858 430 875 460 888 470 920 465 935 438 967 438 960 465 948 485 985 492 1002 502 998 545 975 542 950 522 915 510 888 490 857 492 785 457 780 425 742 390 712 352 700 330 690 322 698 345 740 415 738 422 715 402 700 372 680 345zM917 645 927 657 917 663zM79 1127 86 1129 80 1130z"/>
      <path class="line" transform="translate(0 1020)" d="M915 510 925 490 945 485M920 478 940 478M925 510 950 490 960 505 950 520 1000 502M945 515 970 520"/>
      <g transform="translate(900 1410)">
        <path d="M178 155 222 140 250 157 305 160 328 180 322 215 340 247 405 235 412 215 428 245 415 263 475 272 480 290 525 287 555 307 572 312 577 335 568 352 538 388 535 435 512 488 480 492 440 517 440 550 400 600 392 625 345 617 362 645 352 663 320 672 305 672 305 698 280 698 280 712 293 718 275 735 275 752 255 768 270 785 240 800 240 825 205 840 190 830 175 780 195 740 188 720 197 680 195 652 213 605 218 530 228 440 172 405 150 355 120 315 120 292 130 255 155 235 158 180z"/>
        <path d="M185 852 240 855 260 880 290 902 245 915 205 885z"/>
        <path class="line" d="M222 140 200 165 210 190 252 200 255 235 275 255 320 215M275 225 295 238M252 240 230 240 238 265 225 300 200 310 190 335 210 358 225 355 230 370 275 355 280 378 325 395 330 420 350 430 350 455 310 455 300 482 265 485 250 490M130 250 178 260 205 285 235 285M178 260 170 280 140 305 125 290M240 370 235 435 250 490 248 530 232 555 230 615 220 650 215 720 205 830M300 482 350 515 342 538 375 540 390 525 358 568M350 455 355 480 380 490 385 520M415 263 440 265 420 280 475 272M400 600 410 570 415 580M190 705 200 715 190 725 205 735M180 775 215 760 190 790 215 800M210 745 225 745M195 865 230 870 205 880 250 890 220 900 255 905M240 860 245 895M200 160 225 175M288 153 305 155M420 280 440 275"/>
      </g>
    </g>
    <g class="off">
      <path transform="translate(0 1020)" d="M975 545 1000 550 1015 565 1045 555 1060 570 1055 580 1040 568 1025 578 1000 570zM985 430 1015 418 1050 430 1090 455 1055 452 1020 430zM1090 465 1105 453 1145 465 1115 478zM1155 467 1172 469 1160 471zM1048 470 1068 472 1055 474zM1038 380 1060 382 1045 384zM947 478 952 475 948 490zM33 816 42 810 50 816zM120 784 127 785 122 787zM1215 550 1222 545 1218 555zM1216 505 1220 507 1217 508z"/>
      <path class="line" transform="translate(0 1020)" d="M1050 397 1052 403M1068 400 1082 422M1090 430 1098 440M1222 1250 1235 1246M1238 1250 1252 1240"/>
      <path transform="translate(900 1410)" d="M328 180 345 200 385 203 410 215 400 240 340 247 330 225 322 210zM358 568 397 600 385 625 345 617 343 600z"/>
      <path class="line" transform="translate(900 1410)" d="M355 205 350 220 362 240M388 205 388 235"/>
    </g>
    <!-- Azores -->
    <path class="on" d="M1522 1252 1528 1252 1525 1255zM1566 1268 1572 1270 1568 1273z"/>
    <g class="key">
      <rect x="105" y="2196" width="906" height="72" fill="url(#scale)"/>
      <text x="24" y="2256">1</text><text x="1052" y="2256">9.368</text>
    </g>
  </svg>
  </figure>
</main>
</body>
</html>
```
FILE: styles.css
```css
* { box-sizing: border-box; }
body {
  margin: 0;
  min-height: 100vh;
  background: #f8f9fb;
  font-family: Roboto, "Noto Sans", sans-serif;
  color: #222;
}
button, select { font: inherit; color: inherit; background: none; border: 0; padding: 0; }
a { color: #245c9c; text-decoration: none; }

.topbar {
  display: flex;
  align-items: center;
  height: 102px;
  padding: 22px 52px 0 12px;
}
.title { margin: 0; font-size: 36px; line-height: 40px; font-weight: 700; color: #444; }
.shield { width: 28px; height: 34px; margin-left: 14px; }
.actions { display: flex; align-items: center; gap: 44px; margin-left: auto; }
.action {
  display: flex;
  align-items: center;
  gap: 20px;
  font-size: 22px;
  line-height: 28px;
  font-weight: 700;
  color: #5c5c5c;
  white-space: nowrap;
}
.action svg { width: 28px; height: 28px; overflow: visible; }
.insights svg { width: 30px; height: 30px; }
.divider { width: 2px; height: 40px; margin: 0 -14px; background: #ccc; }

.report {
  margin: 0 22px 0 4px;
  padding-bottom: 14px;
  background: #fff;
  border: 2px solid #e7e8ea;
  border-width: 2px 2px 2px 1px;
}
.segments { display: flex; gap: 20px; padding: 18px 30px 20px 21px; }
.segment {
  display: flex;
  align-items: center;
  gap: 17px;
  flex: 0 1 690px;
  height: 124px;
  padding: 0 49px;
  border: 2px solid #e4e4e4;
  border-radius: 8px;
  text-align: left;
}
.segment-add { border-style: dashed; padding: 0 31px; }
.ring { width: 66px; height: 66px; border: 8px solid #3a8bc2; border-radius: 50%; }
.segment-add .ring { border-color: #e4e4e4; }
.seg-name, .seg-share { display: block; }
.seg-name { font-size: 28px; line-height: 32px; color: #000; }
.seg-share { padding-bottom: 2px; font-size: 23px; line-height: 28px; color: #666; }
.add-label { font-size: 28px; line-height: 32px; padding-bottom: 10px; color: #757575; }
.date {
  display: flex;
  align-items: center;
  align-self: flex-start;
  gap: 15px;
  margin-left: auto;
  height: 54px;
  padding: 0 5px 0 5px;
  border-bottom: 4px solid #eee;
  font-size: 32px;
  color: #22303f;
  white-space: nowrap;
}
.caret { border: 12px solid transparent; border-top-color: #b0b0b0; border-bottom: 0; }

.tabs { display: flex; padding-left: 21px; border-bottom: 2px solid #ccc; }
.tab {
  padding: 14px 16px;
  border: 2px solid transparent;
  border-width: 2px 0 0;
  font-size: 26px;
  line-height: 28px;
  font-weight: 700;
}
.tab-on {
  margin-bottom: -2px;
  color: #222;
  border: 2px solid #ccc;
  border-bottom: 0;
  border-radius: 4px 4px 0 0;
  background: linear-gradient(#f2f2f2, #fff);
}
.subtabs {
  display: flex;
  gap: 32px;
  padding: 15px 37px 16px;
  border-bottom: 2px solid #ccc;
  font-size: 26px;
  line-height: 36px;
}
.sub-on { color: #222; }
.metric { position: relative; width: 180px; margin: 20px 0 0 21px; }
.metric select {
  appearance: none;
  width: 100%;
  height: 62px;
  padding: 0 14px;
  border: 2px solid #ccc;
  border-radius: 4px;
  background: linear-gradient(#fff, #f1f1f1);
  font-size: 22px;
  color: #444;
}
.metric-caret {
  position: absolute;
  right: 15px;
  top: 26px;
  border: 8px solid transparent;
  border-top-color: #666;
  border-bottom: 0;
  pointer-events: none;
}

.map { margin: 4px auto 0; max-width: 1228px; }
.map > svg { display: block; width: 100%; height: auto; }
.on, .off, .mid, .top { stroke-width: 6; }
.on { fill: #b2ddf0; stroke: #a0c6d8; }
.off { fill: #f4f4f4; stroke: #dcdcdc; }
.mid { fill: #8cc4e1; stroke: #7eb0cb; }
.top { fill: #3a8bc2; stroke: #347db0; }
.sea { fill: #fff; }
.line { fill: none; }
.key text {
  font: 78px "Liberation Sans", Arial, sans-serif;
  fill: #222;
  stroke: #fff;
  stroke-width: 16;
  paint-order: stroke;
}
```
